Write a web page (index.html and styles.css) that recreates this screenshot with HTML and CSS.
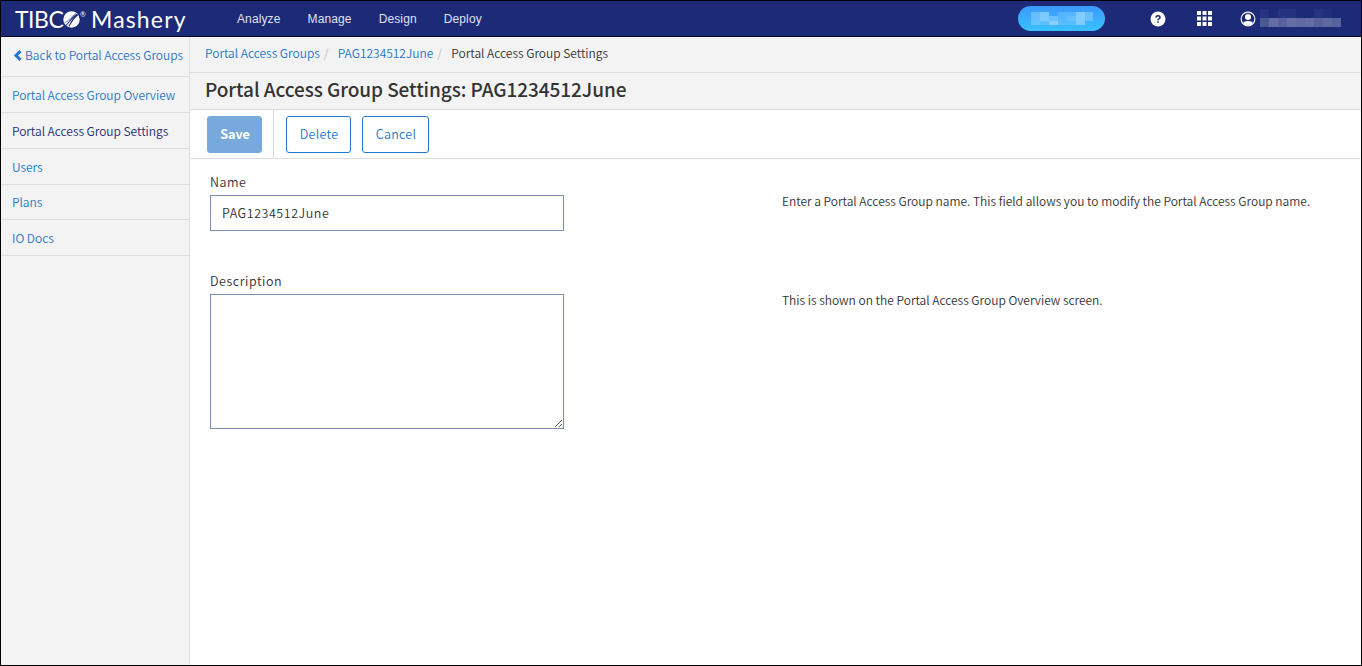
FILE: index.html
```html
<!DOCTYPE html>
<html lang="en">
<head>
<meta charset="utf-8">
<title>Portal Access Group Settings</title>
<link rel="stylesheet" href="styles.css">
</head>
<body>
<div class="app">
  <header class="topbar">
    <div class="brand">
      <span class="brand-tibco">TIBC</span>
      <svg class="brand-orb" width="17" height="17" viewBox="0 0 17 17"><circle cx="8.500" cy="8.500" r="8.200" fill="#fff"/><path d="M2.800 14.500C6.500 11.500 8 6.500 14 3.200M5.800 15.500C8 12 9.500 7.500 14.800 3.800" fill="none" stroke="#1d2a78" stroke-width="1.100"/><path d="M1.500 11.800C5.500 10.500 8 5.500 13 2.600" fill="none" stroke="#1d2a78" stroke-width=".6"/></svg>
      <sup class="brand-reg">®</sup>
      <span class="brand-name">Mashery</span>
    </div>
    <nav class="mainnav"><a>Analyze</a><a>Manage</a><a>Design</a><a>Deploy</a></nav>
    <div class="tools">
      <div class="pill"><svg width="62" height="13" viewBox="0 0 62 13"><g fill="#8bcfff"><path d="M0 0h9v13H0z" opacity=".55"/><path d="M9 0h9v9H9z" opacity=".85"/><path d="M9 9h9v4H9z" opacity=".4"/><path d="M18 4h9v5h-9z" opacity=".6"/><path d="M18 9h9v4h-9z"/><path d="M27 0h18v13H27z" opacity=".35"/><path d="M36 4h9v5h-9z" opacity=".3"/><path d="M45 0h9v13h-9z" opacity=".9"/><path d="M54 0h8v9h-8z" opacity=".6"/></g></svg></div>
      <svg class="help" width="16" height="16" viewBox="0 0 16 16"><circle cx="8" cy="8" r="7.500" fill="#fff"/><path d="M6 6.600Q6 4.700 8 4.700T10 6.400Q10 7.400 8.900 7.900Q8 8.300 8 9.200" fill="none" stroke="#1d2a78" stroke-width="1.500"/><path d="M7.200 10.200h1.600v1.600H7.200z" fill="#1d2a78"/></svg>
      <svg class="grid" width="15" height="15" viewBox="0 0 15 15" fill="#fff"><path d="M0 0h4v4H0zM5.500 0h4v4h-4zM11 0h4v4h-4zM0 5.500h4v4H0zM5.500 5.500h4v4h-4zM11 5.500h4v4h-4zM0 11h4v4H0zM5.500 11h4v4h-4zM11 11h4v4h-4z"/></svg>
      <svg class="user" width="16" height="16" viewBox="0 0 16 16"><circle cx="8" cy="8" r="6.900" fill="none" stroke="#fff" stroke-width="1.100"/><circle cx="8" cy="6" r="3" fill="#fff"/><path d="M3 12.200Q4 10 8 10T13 12.200Q11 14.600 8 14.600T3 12.200z" fill="#fff"/></svg>
      <svg class="account" width="81" height="18" viewBox="0 0 81 18"><path d="M0 0h9v9H0zM18 0h18v9H18zM54 0h9v9h-9z" fill="#263380"/><path d="M63 0h9v9h-9z" fill="#212e7b"/><path d="M0 9h81v9H0z" fill="#56619d"/><path d="M9 9h9v9H9zM27 9h9v9h-9zM45 9h9v9h-9z" fill="#646da4"/><path d="M36 9h9v9h-9zM63 9h9v9h-9z" fill="#5f69a1"/><path d="M0 9h9v9H0z" fill="#4c5795"/></svg>
    </div>
  </header>
  <div class="body">
    <aside class="sidebar">
      <a class="back"><svg width="9" height="11" viewBox="0 0 9 11"><path d="M7.500 1.200L3 5.500L7.500 9.800" fill="none" stroke="#2277cc" stroke-width="3"/></svg><span>Back to Portal Access Groups</span></a>
      <a class="item overview">Portal Access Group Overview</a>
      <a class="item current">Portal Access Group Settings</a>
      <a class="item">Users</a>
      <a class="item short">Plans</a>
      <a class="item">IO Docs</a>
    </aside>
    <main class="main">
      <nav class="crumbs"><a class="c1">Portal Access Groups</a><i>/</i><a class="c2">PAG1234512June</a><i>/</i><span>Portal Access Group Settings</span></nav>
      <h1 class="title">Portal Access Group Settings: PAG1234512June</h1>
      <div class="actions">
        <div class="primary"><button class="btn save">Save</button></div>
        <button class="btn delete">Delete</button>
        <button class="btn cancel">Cancel</button>
      </div>
      <form class="form">
        <div class="row name-row">
          <div class="field"><label for="name">Name</label><input id="name" value="PAG1234512June"></div>
          <p class="hint hint-name">Enter a Portal Access Group name. This field allows you to modify the Portal Access Group name.</p>
        </div>
        <div class="row">
          <div class="field"><label for="desc">Description</label><textarea id="desc"></textarea></div>
          <p class="hint hint-desc">This is shown on the Portal Access Group Overview screen.</p>
        </div>
      </form>
    </main>
  </div>
</div>
</body>
</html>
```
FILE: styles.css
```css
* { box-sizing: border-box; }
body { margin: 0; font-family: "Noto Sans CJK SC", sans-serif; font-size: 12px; font-weight: 350; letter-spacing: -0.012px; color: #333; }
.app { height: 666px; border: 1px solid #000; display: flex; flex-direction: column; overflow: hidden; background: #fff; }
.topbar { height: 36px; flex: none; background: #1d2a78; border-bottom: 1px solid #05081c; display: flex; align-items: center; }
.brand { width: 236px; flex: none; padding-left: 14px; display: flex; align-items: center; color: #fff; font-family: Lato, sans-serif; font-weight: 400; line-height: 36px; }
.brand-tibco { width: 48px; letter-spacing: -0.5px; font-size: 23px; }
.brand-orb { flex: none; margin-top: 2px; }
.brand-reg { font-size: 7px; line-height: 8px; width: 11px; padding-left: 0; align-self: flex-start; margin-top: 9px; }
.brand-name { font-size: 23px; letter-spacing: 1.15px; }
.mainnav { display: flex; gap: 27px; font: 12px/34px "Liberation Sans", sans-serif; letter-spacing: 0.12px; color: #dfe2f1; }
.tools { margin-left: auto; margin-right: 20px; display: flex; align-items: center; }
.pill { width: 87px; height: 25px; border-radius: 13px; background: linear-gradient(#3c98ff, #39c2ff); display: flex; align-items: center; justify-content: center; }
.help { margin-left: 45px; }
.grid { margin-left: 31px; }
.user { margin-left: 28px; }
.account { margin-left: 4px; margin-top: -2px; }
.body { flex: 1; display: flex; min-height: 0; }
.sidebar { width: 189px; flex: none; background: #f3f3f3; border-right: 1px solid #e0e0e0; color: #2a76c6; white-space: nowrap; letter-spacing: -0.03px; }
.back { height: 40px; padding: 0 0 3px 12px; display: flex; align-items: center; gap: 3px; border-bottom: 1px solid #ddd; line-height: 36px; }
.item { display: block; height: 36px; padding-left: 11px; line-height: 36px; border-bottom: 1px solid #ddd; }
.item.short { height: 35px; line-height: 34px; }
.current { color: #1d2a78; }
.main { flex: 1; min-width: 0; }
.crumbs { height: 36px; padding-left: 15px; background: #f3f3f3; border-bottom: 1px solid #ddd; display: flex; line-height: 32px; color: #2277cc; white-space: nowrap; }
.crumbs i { color: #bbb; width: 18px; padding-left: 4px; font-style: normal; }
.crumbs span { color: #333; }
.title { margin: 0; height: 37px; padding-left: 15px; background: #f3f3f3; border-bottom: 1px solid #ddd; font-size: 19px; line-height: 32px; font-weight: 500; letter-spacing: -0.07px; white-space: nowrap; }
.actions { height: 49px; padding-left: 17px; border-bottom: 1px solid #ddd; display: flex; }
.primary { width: 67px; padding-top: 6px; border-right: 1px solid #ddd; }
.btn { height: 37px; padding: 0 0 1px 1px; border: 1px solid #2277cc; border-radius: 3px; background: #fff; color: #2277cc; font: 350 12.5px/34px "Noto Sans CJK SC", sans-serif; letter-spacing: 0.3px; display: block; }
.save { width: 55px; background: #78a9dd; border-color: #78a9dd; color: #fff; font-weight: 700; letter-spacing: 0; }
.delete { width: 65px; margin: 6px 0 0 12px; }
.cancel { width: 67px; margin: 6px 0 0 11px; }
.form { padding: 14px 0 0 20px; }
.row { display: flex; }
.name-row { height: 99px; }
.field { width: 572px; flex: none; }
.field label { display: block; height: 22px; line-height: 18px; letter-spacing: 0.55px; font-size: 12.5px; }
.field input { display: block; width: 354px; height: 36px; margin: 0; padding: 0 11px 2px; border: 1px solid #7c8fb0; background: #fff; color: #333; font: 350 12.5px "Noto Sans CJK SC", sans-serif; letter-spacing: 0.55px; }
.field textarea { display: block; width: 354px; height: 135px; margin: 0; border: 1px solid #7c8fb0; background: #fff; resize: both; }
.hint { margin: 18px 0 0; line-height: 20px; white-space: nowrap; }
```
